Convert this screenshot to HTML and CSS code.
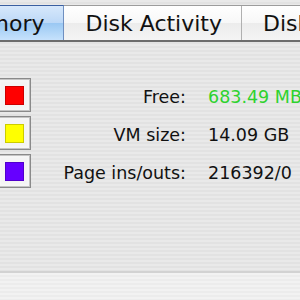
FILE: index.html
```html
<!DOCTYPE html>
<html lang="en">
<head>
  <meta charset="UTF-8">
  <title>Activity Monitor</title>
  <link rel="stylesheet" href="styles.css">
</head>
<body>
  <div class="tabs">
    <div class="tab active">Memory</div>
    <div class="tab">Disk Activity</div>
    <div class="tab">Disk Usage</div>
  </div>

  <div class="panel">
    <div class="wells">
      <div class="well"><span class="swatch red"></span></div>
      <div class="well"><span class="swatch yellow"></span></div>
      <div class="well"><span class="swatch purple"></span></div>
    </div>
    <div class="stats">
      <div class="label">Free:</div><div class="value green">683.49 MB</div>
      <div class="label">VM size:</div><div class="value">14.09 GB</div>
      <div class="label">Page ins/outs:</div><div class="value">216392/0</div>
    </div>
  </div>

  <div class="footer"></div>
</body>
</html>
```

FILE: styles.css
```css
* { box-sizing: border-box; }
html, body { margin: 0; height: 100%; }
body {
  width: 300px; height: 300px;
  overflow: hidden;
  font-family: "DejaVu Sans", "Liberation Sans", sans-serif;
  color: #111;
  background: repeating-linear-gradient(to bottom, #e9e9e9 0, #e9e9e9 2px, #e2e2e2 2px, #e2e2e2 4px);
  display: flex; flex-direction: column;
}

.tabs {
  display: flex;
  margin-top: 5px;
  height: 37px;
  border-top: 1px solid #9c9c9c;
  border-bottom: 2px solid #6c6c6c;
  background: linear-gradient(to bottom, #ffffff 0%, #f7f7f7 50%, #ececec 51%, #f4f4f4 100%);
}
.tab {
  flex: none;
  display: flex; align-items: center;
  padding: 0 19px 0 21px;
  font-size: 22px;
  border-right: 1px solid #b0b0b0;
  white-space: nowrap;
}
.tab.active {
  margin-left: -66px;
  margin-top: -1px;
  border-top: 1px solid #3b5fa0;
  border-right: 1px solid #6f8fc0;
  background: linear-gradient(to bottom, #d7e8fb 0%, #bcd8f7 50%, #9ac8f3 51%, #c6e2fc 100%);
}

.panel {
  display: flex;
  padding-top: 36px;
  height: 229px;
}
.wells {
  display: flex; flex-direction: column; gap: 4px;
  margin-left: -3px;
}
.well {
  width: 34px; height: 34px;
  border: 1px solid #8a8a8a;
  box-shadow: inset 0 0 0 1px #c4c4c4, inset 0 0 0 3px #f6f6f6;
  background: #f4f4f4;
  display: flex; align-items: center; justify-content: center;
}
.swatch {
  width: 19px; height: 19px;
  border: 1px solid rgba(0,0,0,0.2);
}
.red { background: #ff0000; }
.yellow { background: #ffff00; }
.purple { background: #6600ff; }

.stats {
  display: grid;
  grid-template-columns: 155px auto;
  grid-auto-rows: 38px;
  column-gap: 22px;
  align-items: center;
  font-size: 17.5px;
}
.label { text-align: right; }
.value { white-space: nowrap; }
.green { color: #2ed22e; }

.footer {
  flex: 1;
  border-top: 2px solid #d2d2d2;
  background: repeating-linear-gradient(to bottom, #f2f2f2 0, #f2f2f2 2px, #ececec 2px, #ececec 4px);
}
```
